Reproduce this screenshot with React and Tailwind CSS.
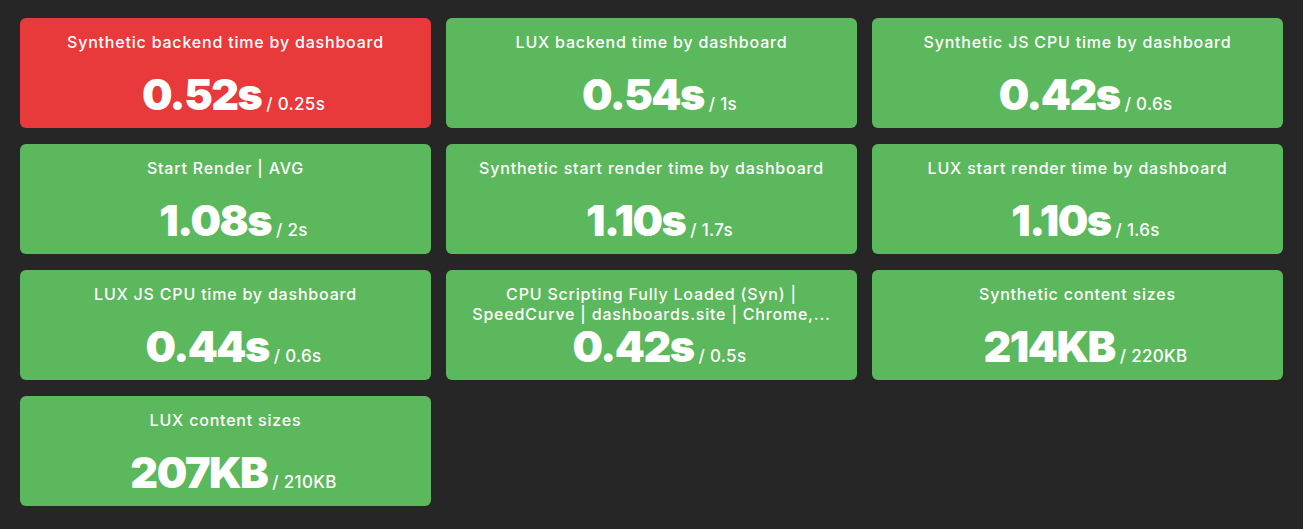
const metrics = [
  { title: "Synthetic backend time by dashboard", value: "0.52s", target: "0.25s", bad: true },
  { title: "LUX backend time by dashboard", value: "0.54s", target: "1s" },
  { title: "Synthetic JS CPU time by dashboard", value: "0.42s", target: "0.6s" },
  { title: "Start Render | AVG", value: "1.08s", target: "2s" },
  { title: "Synthetic start render time by dashboard", value: "1.10s", target: "1.7s" },
  { title: "LUX start render time by dashboard", value: "1.10s", target: "1.6s" },
  { title: "LUX JS CPU time by dashboard", value: "0.44s", target: "0.6s" },
  {
    title: ["CPU Scripting Fully Loaded (Syn) |", "SpeedCurve | dashboards.site | Chrome,..."],
    value: "0.42s",
    target: "0.5s",
  },
  { title: "Synthetic content sizes", value: "214KB", target: "220KB" },
  { title: "LUX content sizes", value: "207KB", target: "210KB" },
];

const MetricCard = ({ title, value, target, bad }) => (
  <div
    className={`h-[110px] rounded-[6px] flex flex-col items-center pt-[14px] text-white ${
      bad ? "bg-[#e8393b]" : "bg-[#5cb85c]"
    }`}
  >
    <div className="h-[41px] text-[16px] leading-[20px] font-medium tracking-[0.8px] text-center">
      {Array.isArray(title)
        ? title.map((line) => (
            <div key={line}>{line}</div>
          ))
        : title}
    </div>
    <div className="flex items-baseline gap-[5px] leading-none pl-[16px]">
      <span className="text-[43px] font-black tracking-[-1.5px]">{value}</span>
      <span className="text-[17px] font-medium tracking-[0.3px]">/ {target}</span>
    </div>
  </div>
);

export default function App() {
  return (
    <div
      className="min-h-[529px] bg-[#262626] px-[20px] pt-[18px]"
      style={{ fontFamily: "Inter, 'Noto Sans', sans-serif" }}
    >
      <div className="grid grid-cols-3 gap-x-[15px] gap-y-[16px]">
        {metrics.map((m, i) => (
          <MetricCard key={i} {...m} />
        ))}
      </div>
    </div>
  );
}
